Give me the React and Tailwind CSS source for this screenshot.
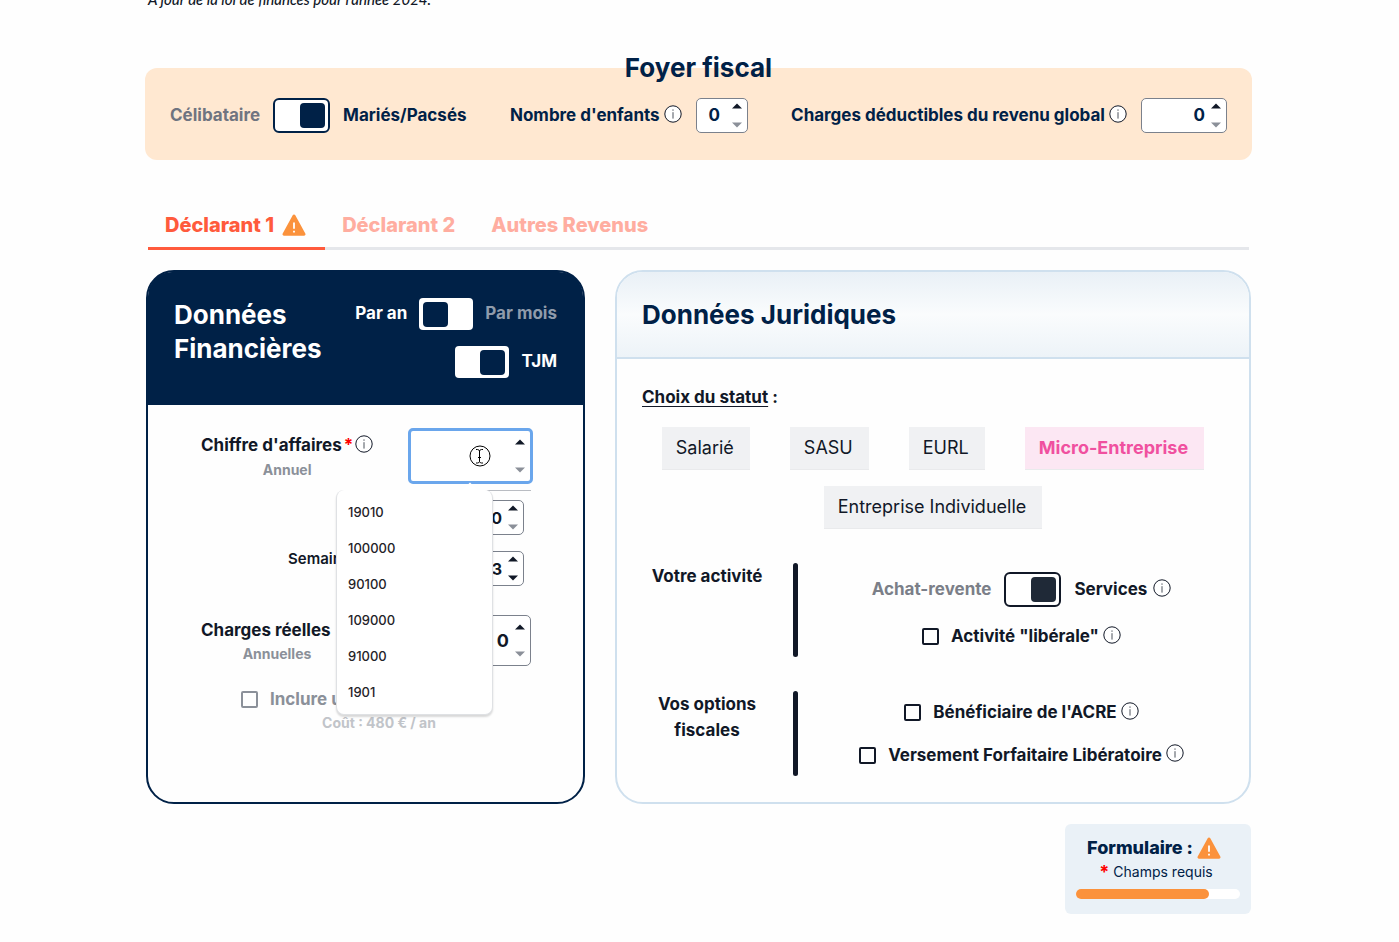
import { useState } from 'react';
import clsx from 'clsx';

const statuses = ['Salarié', 'SASU', 'EURL', 'Micro-Entreprise', 'Entreprise Individuelle'];
const suggestions = ['19010', '100000', '90100', '109000', '91000', '1901'];

function InfoIcon() {
  return (
    <svg viewBox="0 0 18 18" className="mb-1 size-[18px] shrink-0" fill="none" stroke="#111827">
      <circle cx="9" cy="9" r="8.2" fill="white" />
      <path d="M9 7.2v6.4" strokeOpacity="0.75" />
      <path d="M9 4.4v1.4" strokeOpacity="0.75" />
    </svg>
  );
}

function WarningIcon() {
  return (
    <svg viewBox="0 0 24 22" className="h-[22px] w-6 shrink-0">
      <path
        d="M10.7 1.2a1.5 1.5 0 0 1 2.6 0l10 18.3a1.5 1.5 0 0 1-1.3 2.2H2a1.5 1.5 0 0 1-1.3-2.2z"
        fill="#fb923c"
      />
      <path d="M12 8.6v6.2M12 16.8v1.8" stroke="white" strokeWidth="1.8" />
    </svg>
  );
}

function Toggle({ label, defaultChecked, variant = 'navy' }) {
  return (
    <input
      type="checkbox"
      role="switch"
      aria-label={label}
      defaultChecked={defaultChecked}
      className={clsx(
        'flex shrink-0 appearance-none items-center bg-white before:block before:size-[25px] before:rounded checked:justify-end',
        variant === 'navy' && 'h-[35px] w-[57px] rounded-md border-2 border-[#002147] px-[3px] before:bg-[#002147]',
        variant === 'slate' && 'h-[35px] w-[57px] rounded-md border-2 border-[#111827] px-[3px] before:bg-[#1f2937]',
        variant === 'plain' && 'h-8 w-[54px] rounded px-1 before:bg-[#002147]'
      )}
    />
  );
}

function NumberField({ id, label, defaultValue, className, inputClassName, canDecrease }) {
  const [value, setValue] = useState(defaultValue);
  const step = (n) => setValue(String(Math.max(0, Number(value) + n)));

  return (
    <div className={clsx('flex shrink-0 rounded-[5px] bg-white pr-[5px]', className)}>
      <input
        id={id}
        aria-label={label}
        inputMode="numeric"
        value={value}
        onChange={(e) => setValue(e.target.value)}
        className={clsx('w-0 min-w-0 flex-1 bg-transparent font-bold outline-none', inputClassName)}
      />
      <div className="flex shrink-0 flex-col justify-between py-1">
        <button type="button" aria-label="Augmenter" onClick={() => step(1)}>
          <svg viewBox="0 0 10 6" className="h-1.5 w-2.5">
            <path d="M0 5.5 5 .5l5 5z" fill="#111827" />
          </svg>
        </button>
        <button type="button" aria-label="Diminuer" onClick={() => step(-1)}>
          <svg viewBox="0 0 10 6" className="h-1.5 w-2.5">
            <path d="M0 .5 5 5.5l5-5z" fill={canDecrease ? '#111827' : '#8b9099'} />
          </svg>
        </button>
      </div>
    </div>
  );
}

function CheckRow({ id, label }) {
  return (
    <div className="flex items-center">
      <input id={id} type="checkbox" className="mr-3 size-[17px] appearance-none rounded-xs border-2 border-[#111827]" />
      <label htmlFor={id} className="mr-1">{label}</label>
      <InfoIcon />
    </div>
  );
}

function FoyerFiscal() {
  return (
    <section className="-mx-px mt-[59px] rounded-xl bg-[#ffe8d1] px-[25px] pb-[27px] text-[#002147]">
      <h2 className="-mt-[17px] text-center text-[26px] leading-[34px] font-bold">Foyer fiscal</h2>
      <div className="mt-[13px] flex items-center justify-between text-[17px] font-bold">
        <div className="flex items-center gap-[13px]">
          <span className="text-[#6f7480]">Célibataire</span>
          <Toggle label="Mariés/Pacsés" defaultChecked />
          <span>Mariés/Pacsés</span>
        </div>
        <div className="flex items-center">
          <label htmlFor="enfants" className="mr-1">Nombre d'enfants</label>
          <InfoIcon />
          <NumberField
            id="enfants"
            defaultValue="0"
            className="ml-3.5 h-[35px] w-[52px] border border-[#7b818c]"
            inputClassName="text-center"
          />
        </div>
        <div className="flex items-center">
          <label htmlFor="deductibles" className="mr-1">Charges déductibles du revenu global</label>
          <InfoIcon />
          <NumberField
            id="deductibles"
            defaultValue="0"
            className="ml-3.5 h-[35px] w-[86px] border border-[#7b818c]"
            inputClassName="pr-1.5 text-right"
          />
        </div>
      </div>
    </section>
  );
}

function Tabs() {
  const tab = 'flex h-12 items-center gap-2 border-b-3 pr-[19px] pl-[17px]';
  return (
    <div role="tablist" className="mx-0.5 mt-[42px] flex text-[20px] font-extrabold text-[#ffada0] shadow-[inset_0_-3px_#e5e7eb]">
      <button role="tab" aria-selected="true" className={clsx(tab, 'border-[#ff5a3c] text-[#ff5a3c]')}>
        Déclarant 1
        <WarningIcon />
      </button>
      <button role="tab" aria-selected="false" className={clsx(tab, 'border-transparent')}>Déclarant 2</button>
      <button role="tab" aria-selected="false" className={clsx(tab, 'border-transparent')}>Autres Revenus</button>
    </div>
  );
}

function Suggestions() {
  return (
    <ul className="absolute top-[62px] right-10 z-10 w-[157px] rounded-lg border border-t-0 border-[#dfe1e4] bg-white pt-[5px] pb-[3px] text-[13px] font-medium text-[#1f2328] shadow-[0_2px_2px_rgba(0,0,0,0.15)]">
      <li aria-hidden="true" className="absolute -top-[5px] right-4 size-3 rotate-45 bg-white" />
      {suggestions.map((value) => (
        <li key={value} className="relative flex h-9 items-center px-[11px]">{value}</li>
      ))}
    </ul>
  );
}

function TextCursor() {
  return (
    <svg viewBox="0 0 22 22" className="absolute top-[17px] left-[61px] size-[22px]" fill="none" stroke="black">
      <circle cx="11" cy="11" r="10" />
      <path d="M7 4.500h1.500q1.500 0 2 1.500v10.500q-.5 1.500-2 1.500H7M14 4.500h-1.500q-1.500 0-2 1.500M14 18h-1.500q-1.500 0-2-1.500M9 12.500h3" />
    </svg>
  );
}

function DonneesFinancieres() {
  return (
    <section className="flex w-[439px] shrink-0 flex-col rounded-[28px] border-2 border-[#002147]">
      <header className="flex h-[133px] justify-between rounded-t-3xl bg-[#002147] px-[26px] pt-[26px] text-white">
        <h2 className="w-40 text-[26px] leading-[34px] font-bold">Données Financières</h2>
        <div className="flex flex-col items-end gap-4 text-[17px] font-bold">
          <div className="flex items-center gap-3">
            <span>Par an</span>
            <Toggle label="Par mois" variant="plain" />
            <span className="text-[#8f9bab]">Par mois</span>
          </div>
          <div className="flex items-center gap-3">
            <Toggle label="TJM" variant="plain" defaultChecked />
            <span>TJM</span>
          </div>
        </div>
      </header>

      <div className="pt-[23px] pr-[50px] pl-[53px]">
        <div className="relative flex justify-between">
          <div className="text-center">
            <div className="flex h-9 items-center text-[17px] font-bold">
              <label htmlFor="ca">Chiffre d'affaires</label>
              <span className="mx-0.5 text-[#ff0000]">*</span>
              <InfoIcon />
            </div>
            <p className="text-sm leading-3 font-bold text-[#8b9099]">Annuel</p>
          </div>
          <div className="relative">
            <NumberField
              id="ca"
              defaultValue=""
              className="h-14 w-[125px] border-3 border-[#6aa6ec] py-1"
              inputClassName="text-right"
            />
            <TextCursor />
          </div>
          <Suggestions />
        </div>

        <hr className="mt-1.5 mr-0.5 ml-auto w-11 border-[#b9bcc2]" />
        <div className="mt-[9px] flex flex-col items-end gap-4 pr-[9px] text-[15px] font-semibold">
          <NumberField
            label="Jours"
            defaultValue="0"
            className="h-[35px] w-16 border border-[#7b818c]"
            inputClassName="pr-1.5 text-right text-base"
          />
          <div className="flex w-[236px] justify-between">
            <label htmlFor="semaines" className="leading-4">Semaines</label>
            <NumberField
              id="semaines"
              defaultValue="3"
              canDecrease
              className="h-[35px] w-16 border border-[#7b818c]"
              inputClassName="pr-1.5 text-right text-base"
            />
          </div>
        </div>

        <div className="mt-[29px] flex justify-between pr-0.5">
          <div className="w-[152px]">
            <label htmlFor="charges" className="flex h-[31px] items-center text-[17px] font-bold">Charges réelles</label>
            <p className="text-center text-sm leading-4 font-bold text-[#8b9099]">Annuelles</p>
          </div>
          <NumberField
            id="charges"
            defaultValue="0"
            className="h-[51px] w-[120px] border border-[#7b818c] py-1"
            inputClassName="pr-1.5 text-right text-lg"
          />
        </div>

        <div className="mt-[21px] ml-10 flex items-center text-[17px] font-bold text-[#8b9099]">
          <input id="comptable" type="checkbox" className="mr-3 size-[17px] appearance-none rounded-xs border-2 border-[#8b9099]" />
          <label htmlFor="comptable">Inclure un comptable</label>
        </div>
        <p className="pl-6 text-center text-sm font-bold text-[#c1c4c9]">Coût : 480 € / an</p>
      </div>
    </section>
  );
}

function DonneesJuridiques() {
  return (
    <section className="flex min-w-0 flex-1 flex-col rounded-[28px] border-2 border-[#cfe0ee] text-[17px] font-bold">
      <header className="flex h-[87px] items-center rounded-t-[26px] border-b-2 border-[#cfe0ee] bg-linear-to-b from-[#e9f0f6] via-[#fafcfd] to-[#edf3f8] px-[25px]">
        <h2 className="text-[26px] leading-[34px] font-bold text-[#002147]">Données Juridiques</h2>
      </header>

      <div className="px-[25px] py-[26px]">
        <h3 className="leading-6"><span className="underline underline-offset-3">Choix du statut</span> :</h3>

        <div className="mt-[18px] flex flex-wrap justify-center gap-x-10 gap-y-4 text-lg font-normal">
          {statuses.map((status) => (
            <button
              key={status}
              type="button"
              className={clsx(
                'h-[43px] border-b border-[#e9eaec] pr-4 pl-3.5',
                status === 'Micro-Entreprise' ? 'bg-[#fce7f3] font-bold text-[#f0509f]' : 'bg-[#f0f1f3]'
              )}
            >
              {status}
            </button>
          ))}
        </div>

        <div className="mt-[34px] grid grid-cols-[130px_5px_1fr] gap-x-[21px] gap-y-[34px]">
          <h3 className="text-center leading-[26px]">Votre activité</h3>
          <div className="h-[94px] rounded-full bg-[#111827]" />
          <div className="flex flex-col items-center gap-[17px] pt-[9px]">
            <div className="flex items-center gap-[13px]">
              <span className="text-[#7b7f88]">Achat-revente</span>
              <Toggle label="Services" variant="slate" defaultChecked />
              <span className="flex items-center gap-1.5">Services <InfoIcon /></span>
            </div>
            <CheckRow id="liberale" label={'Activité "libérale"'} />
          </div>

          <h3 className="text-center leading-[26px]">Vos options fiscales</h3>
          <div className="h-[85px] rounded-full bg-[#111827]" />
          <div className="flex flex-col items-center gap-[17px] pt-[9px]">
            <CheckRow id="acre" label="Bénéficiaire de l'ACRE" />
            <CheckRow id="versement" label="Versement Forfaitaire Libératoire" />
          </div>
        </div>
      </div>
    </section>
  );
}

function FormStatus() {
  return (
    <aside className="mt-5 ml-auto h-[90px] w-[186px] rounded-md bg-[#eaf1f7] px-[11px] pt-3 text-[#002147]">
      <div className="flex items-center justify-center gap-1 pr-2 text-lg leading-6 font-extrabold">
        Formulaire : <WarningIcon />
      </div>
      <p className="flex h-6 items-center justify-center gap-1 pr-1 text-sm">
        <span className="text-lg font-bold text-[#ff0000]">*</span> Champs requis
      </p>
      <div className="mt-[5px] h-2.5 rounded-full bg-white">
        <div className="h-full w-[81%] rounded-full bg-[#fb923c]" />
      </div>
    </aside>
  );
}

export default function App() {
  return (
    <div className="flex min-h-screen flex-col overflow-hidden bg-[#fefefe] pr-0.5 font-['Inter',sans-serif] text-[#111827]">
      <main className="mx-auto flex w-full max-w-[1105px] flex-col">
        <p className="-mt-[11px] ml-0.5 font-['Lato',sans-serif] text-[15px] leading-5 font-medium italic">
          À jour de la loi de finances pour l'année 2024.
        </p>
        <FoyerFiscal />
        <Tabs />
        <div className="mt-5 flex gap-[30px]">
          <DonneesFinancieres />
          <DonneesJuridiques />
        </div>
        <FormStatus />
      </main>
    </div>
  );
}
